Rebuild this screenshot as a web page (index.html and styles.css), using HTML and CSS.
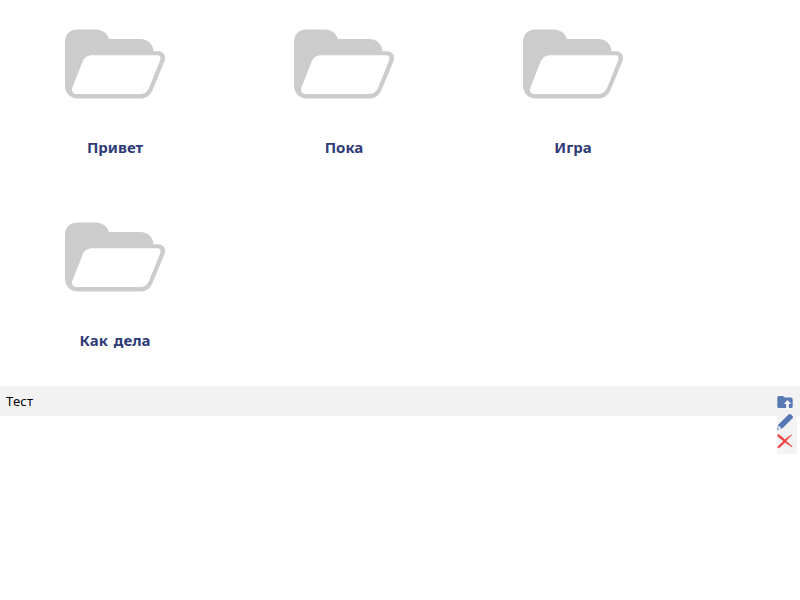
FILE: index.html
```
<!DOCTYPE html>
<html lang="ru">
<head>
<meta charset="utf-8">
<title>Папки</title>
<link rel="stylesheet" href="styles.css">
</head>
<body>
<svg class="defs" width="0" height="0" aria-hidden="true">
  <symbol id="folder" viewBox="0 0 100 70">
    <path fill="#ccc" fill-rule="evenodd" d="M13 .5H31C37 .5 42 4 44 10H75C83 10 88 15 88.500 22.300H92C99 22.300 101.500 27 99.500 32L88 60C85 67 81 69.500 75 69.500H13C5 69.500 0 64 0 56V13C0 5 5 .5 13 .5ZM28 26.300C22 26.300 19 29 17.500 33L8 57C5.500 62 8 65 11 65H75C80 65 82.500 62 84 59L94.500 33C96.500 28.500 95.500 26.300 92.500 26.300Z"/>
  </symbol>
</svg>
<main class="folders">
  <a class="folder"><svg class="folder-icon"><use href="#folder"/></svg><span class="folder-name">Привет</span></a>
  <a class="folder"><svg class="folder-icon"><use href="#folder"/></svg><span class="folder-name">Пока</span></a>
  <a class="folder"><svg class="folder-icon"><use href="#folder"/></svg><span class="folder-name">Игра</span></a>
  <a class="folder"><svg class="folder-icon"><use href="#folder"/></svg><span class="folder-name">Как дела</span></a>
</main>
<section class="row">
  <span class="row-title">Тест</span>
  <div class="actions">
    <svg class="action" viewBox="0 0 16 16"><path fill="#5a7ab5" d="M2 2H6L8 3.500H14Q15.700 3.500 15.700 5.500V12.500Q15.700 14 14 14H2Q.3 14 .3 12.500V3.500Q.3 2 2 2Z"/><path fill="#fff" d="M10.500 6 14 10H11.800V14H9.200V10H7Z"/></svg>
    <svg class="action" viewBox="0 0 16 16"><path fill="#5578b4" d="M11.500.5Q12.800-.5 14 .5L15.500 2Q16.400 3.200 15.500 4.200L5.500 14.200 0 16 1.500 10.500Z"/><path fill="#e8edf5" d="M1.800 11.700 4.500 14.300 1.900 15.200.9 14.200Z"/></svg>
    <svg class="action" viewBox="0 0 16 16"><path fill="#ee4545" d="M.3 1.500Q1.500.7 2.500 1.800L8 6.600Q11 3.300 14.800 1.500L15.200 2.100Q12 4.600 9.400 8L15.500 13.500 14.900 14.300 8.100 9.600Q5 13 2.200 15Q.8 15 .1 14Q3 12 6.200 8.100L.6 3.500Z"/></svg>
  </div>
</section>
</body>
</html>
```

FILE: styles.css
```
body {
  margin: 0;
  min-height: 100vh;
  background: #fff;
  font-family: "Noto Sans", "Open Sans", sans-serif;
}

.defs {
  display: block;
}

.folders {
  display: grid;
  grid-template-columns: repeat(3, 229px);
  grid-auto-rows: 193px;
}

.folder {
  display: flex;
  flex-direction: column;
  align-items: center;
  padding: 29px 0 0 1px;
  box-sizing: border-box;
}

.folder-icon {
  width: 100px;
  height: 70px;
}

.folder-name {
  margin-top: 38px;
  color: #2f3b78;
  font-size: 15px;
  font-weight: 700;
  line-height: 20px;
  word-spacing: 2px;
}

.row {
  display: flex;
  justify-content: space-between;
  height: 30px;
  padding: 0 3px 0 6px;
  background: #f3f3f3;
}

.row-title {
  font-size: 13px;
  line-height: 30px;
  letter-spacing: 0.2px;
}

.actions {
  display: flex;
  flex-direction: column;
  gap: 4px;
  width: 20px;
  height: 60px;
  padding-top: 8px;
  background: #f3f3f3;
}

.action {
  flex: none;
  width: 16px;
  height: 16px;
}

.action + .action + .action {
  margin-top: -1px;
}
```
